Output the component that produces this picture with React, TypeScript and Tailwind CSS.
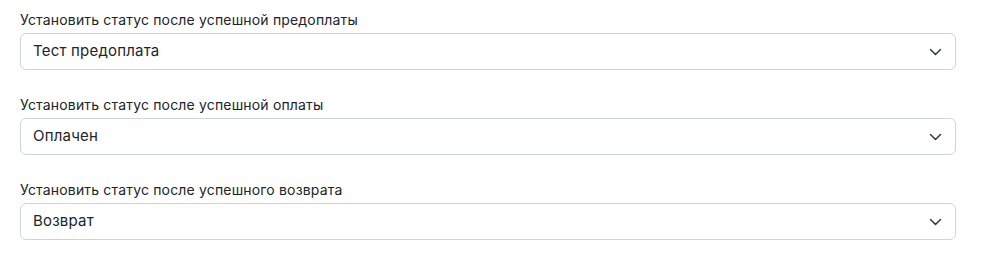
const fields = [
  { label: 'Установить статус после успешной предоплаты', value: 'Тест предоплата' },
  { label: 'Установить статус после успешной оплаты', value: 'Оплачен' },
  { label: 'Установить статус после успешного возврата', value: 'Возврат' },
];

function Chevron() {
  return (
    <svg width="13" height="8" viewBox="0 0 13 8" fill="none" className="text-[#343a40]">
      <path d="M1.5 1.5 6.5 6.5 11.5 1.5" stroke="currentColor" strokeWidth="1.5" strokeLinecap="round" strokeLinejoin="round" />
    </svg>
  );
}

export default function App() {
  return (
    <div className="bg-white w-[987px] h-[272px] px-5 pt-[10px] font-[Inter,sans-serif] text-[#212529]">
      <div className="w-[936px] flex flex-col gap-[25px]">
        {fields.map((f) => (
          <div key={f.label} className="flex flex-col">
            <label className="text-[14px] leading-[20px] mb-[3px] tracking-[0.17px]">{f.label}</label>
            <div className="h-[37px] flex items-center justify-between pl-3 pr-[13px] border border-[#ced4da] rounded-[6px] bg-white">
              <span className="text-[15px] tracking-[0.2px]">{f.value}</span>
              <Chevron />
            </div>
          </div>
        ))}
      </div>
    </div>
  );
}
